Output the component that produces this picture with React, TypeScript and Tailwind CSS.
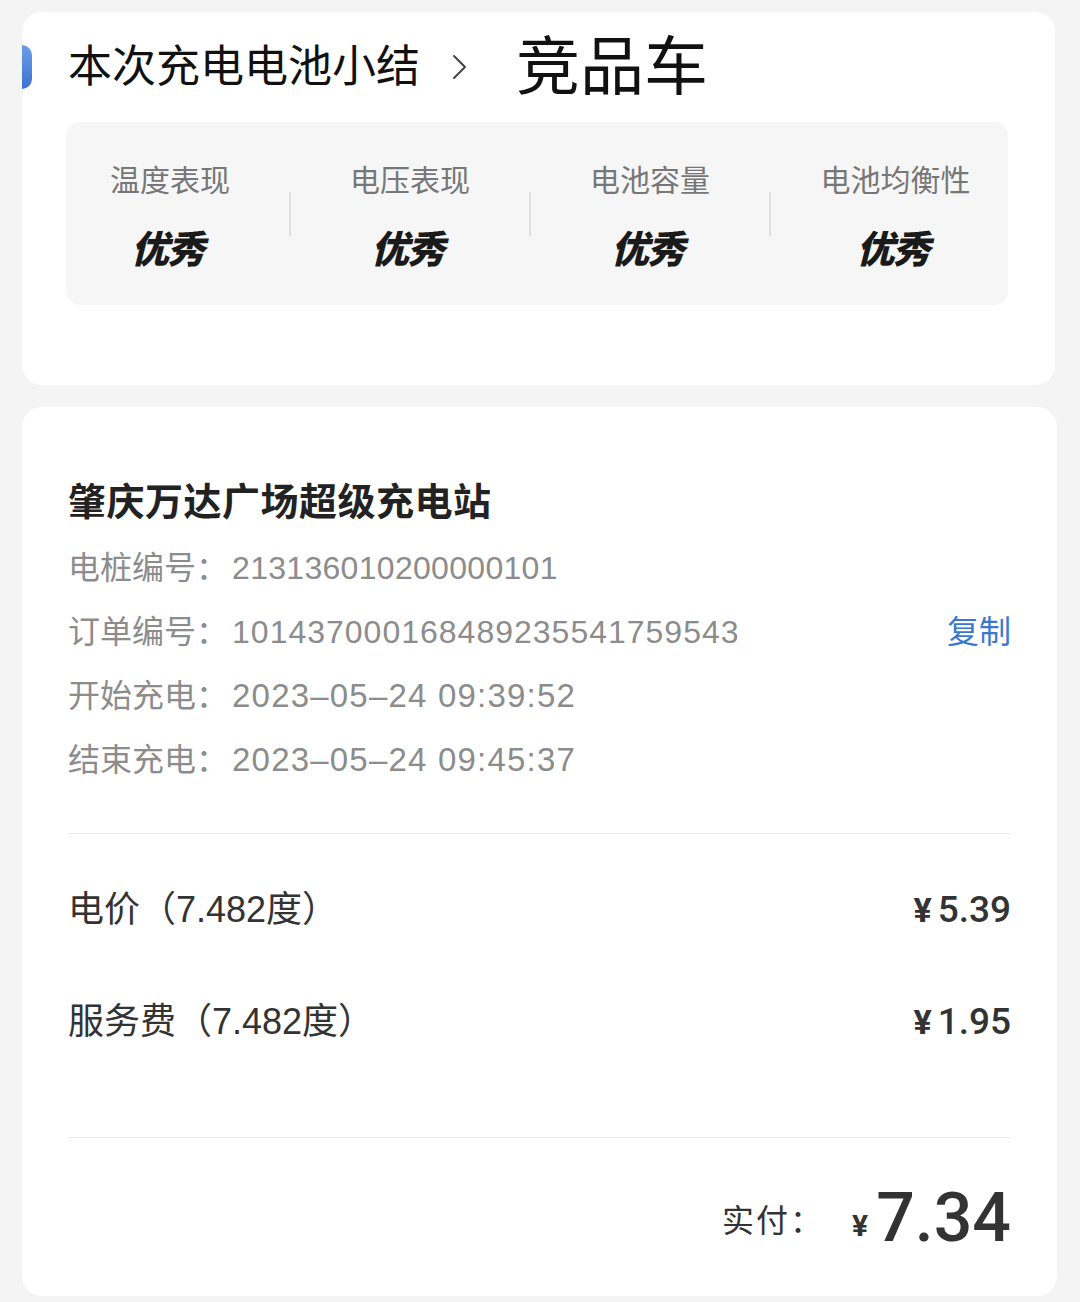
const sans = "font-['Liberation_Sans','Noto_Sans_CJK_SC',sans-serif]";
const num = "font-['Roboto','Noto_Sans_CJK_SC',sans-serif]";

const metrics = ["温度表现", "电压表现", "电池容量", "电池均衡性"];

function Divider() {
  return <div className="h-[44px] w-[2px] shrink-0 self-end mb-[36px] bg-[#e0e0e0]" />;
}

function Metric({ label, className }: { label: string; className: string }) {
  return (
    <div className={`flex flex-col items-center ${className}`}>
      <span className="h-[40px] text-[30px] leading-[40px] text-[#777]">{label}</span>
      <span className="mt-[27px] mr-[6px] h-[44px] text-[38px] leading-[44px] font-black italic text-[#1a1a1a] tracking-[-2px]">
        优秀
      </span>
    </div>
  );
}

function SummaryCard() {
  return (
    <div className="mr-[2px] rounded-[20px] bg-white pt-[23px] pb-[80px]">
      <div className="flex h-[64px] items-center">
        <div className="h-[44px] w-[10px] rounded-r-full bg-gradient-to-b from-[#6d9de6] to-[#3a72d2]" />
        <span className="ml-[36px] text-[44px] leading-none text-[#111]">本次充电电池小结</span>
        <svg className="ml-[32px]" width="16" height="26" viewBox="0 0 16 26" fill="none">
          <path d="M2 2 L13 13 L2 24" stroke="#444" strokeWidth="2" strokeLinecap="round" strokeLinejoin="round" />
        </svg>
        <span className="ml-[48px] text-[64px] leading-none text-[#111]">竞品车</span>
      </div>
      <div className="ml-[44px] mr-[47px] mt-[23px] flex rounded-[14px] bg-[#f6f6f6] pt-[39px] pb-[33px]">
        <Metric label={metrics[0]} className="w-[208px]" />
        <div className="w-[15px]" />
        <Divider />
        <Metric label={metrics[1]} className="w-[238px]" />
        <Divider />
        <Metric label={metrics[2]} className="w-[238px]" />
        <Divider />
        <Metric label={metrics[3]} className="flex-1 pl-[12px]" />
      </div>
    </div>
  );
}

function InfoRow({
  label,
  value,
  valueClass,
  action,
}: {
  label: string;
  value: string;
  valueClass: string;
  action?: string;
}) {
  return (
    <div className="flex h-[64px] items-center text-[32px] text-[#8c8c8c]">
      <span>{label}：</span>
      <span className={`ml-[4px] ${valueClass}`}>{value}</span>
      {action ? <span className="ml-auto text-[#3a78d0]">{action}</span> : null}
    </div>
  );
}

function FeeRow({ label, amount }: { label: string; amount: string }) {
  return (
    <div className="flex h-[56px] items-center justify-between text-[#333]">
      <span className="text-[36px]">{label}</span>
      <span className={`${num} text-[37px] font-medium`}>
        <span className="mr-[6px] text-[34px] font-bold">¥</span>
        {amount}
      </span>
    </div>
  );
}

function OrderCard() {
  return (
    <div className="mt-[22px] rounded-[20px] bg-white px-[46px] pt-[71px] pb-[38px]">
      <div className="h-[48px] text-[38px] leading-[48px] font-bold tracking-[0.5px] text-[#222]">
        肇庆万达广场超级充电站
      </div>
      <div className="mt-[10px]">
        <InfoRow label="电桩编号" value="213136010200000101" valueClass="tracking-[0.3px]" />
        <InfoRow
          label="订单编号"
          value="101437000168489235541759543"
          valueClass="tracking-[1px]"
          action="复制"
        />
        <InfoRow label="开始充电" value="2023–05–24 09:39:52" valueClass="text-[33px] tracking-[1.2px]" />
        <InfoRow label="结束充电" value="2023–05–24 09:45:37" valueClass="text-[33px] tracking-[1.2px]" />
      </div>
      <div className="mt-[41px] h-px bg-[#ececec]" />
      <div className="mt-[48px]">
        <FeeRow label="电价（7.482度）" amount="5.39" />
        <div className="h-[56px]" />
        <FeeRow label="服务费（7.482度）" amount="1.95" />
      </div>
      <div className="mt-[87px] h-px bg-[#ececec]" />
      <div className="mt-[40px] flex h-[80px] items-center justify-end text-[#333]">
        <span className="mt-[6px] text-[32px] tracking-[2px]">实付：</span>
        <span className={`${num} ml-[28px] mt-[14px] text-[30px] font-bold`}>¥</span>
        <span className={`${num} ml-[8px] text-[68px] leading-none font-medium`}>7.34</span>
      </div>
    </div>
  );
}

export default function App() {
  return (
    <div className={`${sans} min-h-[1302px] w-[1080px] bg-[#f4f4f4] pt-[12px] pl-[22px] pr-[23px]`}>
      <SummaryCard />
      <OrderCard />
    </div>
  );
}
